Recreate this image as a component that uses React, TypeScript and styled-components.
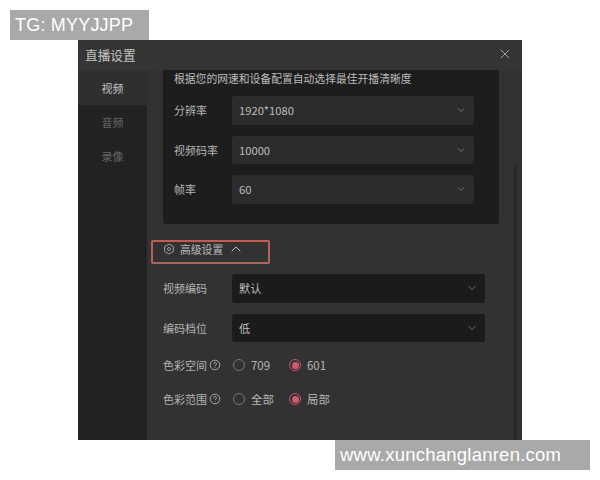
import React from "react";
import styled, { createGlobalStyle } from "styled-components";
import { X, ChevronDown, ChevronUp } from "lucide-react";

const CJK = `"Noto Sans CJK SC", "Noto Sans", sans-serif`;

const GlobalStyle = createGlobalStyle`
    html, body {
        margin: 0;
        padding: 0;
        background: #fff;
    }
    body {
        width: 600px;
        height: 480px;
        overflow: hidden;
        font-family: ${CJK};
    }
`;

const Page = styled.div`
    display: flex;
    flex-direction: column;
    align-items: flex-start;
    padding-top: 10px;
`;

const TopMark = styled.div`
    width: 139px;
    height: 30px;
    margin-left: 10px;
    padding-left: 5px;
    box-sizing: border-box;
    background: #a9a9a9;
    color: #fff;
    font: 18px/30px "Liberation Sans", sans-serif;
    letter-spacing: 0.2px;
`;

const BottomMark = styled.div`
    width: 255px;
    height: 30px;
    margin-left: 335px;
    padding-left: 5px;
    box-sizing: border-box;
    background: #a9a9a9;
    color: #fff;
    font: 18.5px/29px "Liberation Sans", sans-serif;
    letter-spacing: 0.24px;
`;

const Window = styled.div`
    width: 444px;
    height: 400px;
    margin-left: 78px;
    display: flex;
    flex-direction: column;
    background: #323232;
    overflow: hidden;
`;

const TitleBar = styled.div`
    height: 30px;
    flex: none;
    display: flex;
    align-items: center;
    justify-content: space-between;
    padding: 0 9px 2px 7px;
    box-sizing: border-box;
    background: #353535;
    color: #c4c4c4;
    font-size: 12.7px;
`;

const Body = styled.div`
    flex: 1;
    display: flex;
    min-height: 0;
`;

const Sidebar = styled.div`
    width: 69px;
    flex: none;
    background: #222;
`;

const Tab = styled.div<{ $active?: boolean }>`
    height: 34px;
    display: flex;
    align-items: center;
    justify-content: center;
    font-size: 11px;
    color: ${(p) => (p.$active ? "#c4c4c4" : "#666")};
    background: ${(p) => (p.$active ? "#2f2f2f" : "transparent")};
    &:first-child {
        height: 35px;
    }
`;

const Content = styled.div`
    flex: 1;
    display: flex;
    flex-direction: column;
    padding-left: 4px;
    position: relative;
`;

const Scrollbar = styled.div`
    position: absolute;
    right: 5px;
    top: 95px;
    bottom: 0;
    width: 3px;
    background: #2a2a2a;
`;

const InnerPanel = styled.div`
    width: 336px;
    height: 154px;
    margin-left: 12px;
    box-sizing: border-box;
    padding: 0 25px 0 11px;
    background: #1d1d1d;
    border-radius: 0 0 3px 3px;
`;

const Hint = styled.div`
    height: 18px;
    margin-bottom: 8px;
    font-size: 10.8px;
    line-height: 17px;
    color: #bdbdbd;
    white-space: nowrap;
`;

const Rows = styled.div<{ $gap: number; $top?: number }>`
    display: flex;
    flex-direction: column;
    gap: ${(p) => p.$gap}px;
    margin-top: ${(p) => p.$top ?? 0}px;
`;

const FieldRow = styled.div`
    display: flex;
    align-items: center;
`;

const FieldLabel = styled.div<{ $width: number }>`
    width: ${(p) => p.$width}px;
    flex: none;
    font-size: 11px;
    color: #b4b4b4;
    white-space: nowrap;
`;

const Select = styled.div<{ $dark?: boolean; $width: number }>`
    width: ${(p) => p.$width}px;
    height: 28.5px;
    display: flex;
    align-items: center;
    justify-content: space-between;
    box-sizing: border-box;
    padding: 0 7px;
    border-radius: 3px;
    font-size: 11.2px;
    color: #bdbdbd;
    background: ${(p) => (p.$dark ? "#1b1b1b" : "#2c2c2c")};
`;

const Caret = styled(ChevronDown)`
    color: #9a9a9a;
    flex: none;
`;

const AdvancedRow = styled.div`
    width: 119px;
    height: 24px;
    margin: 16px 0 10px 0;
    box-sizing: border-box;
    display: flex;
    align-items: center;
    gap: 5px;
    padding: 0 0 6px 10px;
    border: 2px solid #b95f59;
    border-radius: 2px;
    font-size: 10.8px;
    line-height: 14px;
    color: #bdbdbd;
    white-space: nowrap;
`;

const Advanced = styled.div`
    display: flex;
    flex-direction: column;
    padding-left: 12px;
`;

const RadioRow = styled.div`
    display: flex;
    align-items: center;
    height: 20px;
`;

const RadioLabel = styled.div`
    width: 70px;
    flex: none;
    display: flex;
    align-items: center;
    gap: 2px;
    font-size: 11px;
    color: #b4b4b4;
    white-space: nowrap;
`;

const RadioItem = styled.div<{ $width: number }>`
    width: ${(p) => p.$width}px;
    display: flex;
    align-items: center;
    gap: 6px;
    font-size: 11.4px;
    color: #b8b8b8;
    white-space: nowrap;
`;

const RadioDot = styled.span<{ $on?: boolean }>`
    width: 12px;
    height: 12px;
    flex: none;
    box-sizing: border-box;
    border-radius: 50%;
    border: 1px solid ${(p) => (p.$on ? "#d0506a" : "#777")};
    display: flex;
    align-items: center;
    justify-content: center;
    &::after {
        content: "";
        width: 7px;
        height: 7px;
        border-radius: 50%;
        background: ${(p) => (p.$on ? "#cf5a70" : "transparent")};
    }
`;

const HelpIcon = () => (
    <svg width="12" height="12" viewBox="0 0 12 12" fill="none" stroke="#b0b0b0" strokeWidth="0.9">
        <circle cx="6" cy="6" r="4.8" />
        <path d="M4.6 4.8a1.4 1.4 0 1 1 2.2 1.1c-.5.3-.8.6-.8 1.1" />
        <path d="M6 8.2v.7" />
    </svg>
);

const HexIcon = () => (
    <svg width="12" height="12" viewBox="0 0 12 12" fill="none" stroke="#aaa" strokeWidth="0.9">
        <path d="M6 1l4.4 2.5v5L6 11 1.6 8.5v-5z" />
        <circle cx="6" cy="6" r="1.5" />
    </svg>
);

const basicFields = [
    { label: "分辨率", value: "1920*1080" },
    { label: "视频码率", value: "10000" },
    { label: "帧率", value: "60" },
];

const advancedFields = [
    { label: "视频编码", value: "默认" },
    { label: "编码档位", value: "低" },
];

const radioFields = [
    { label: "色彩空间", off: "709", on: "601" },
    { label: "色彩范围", off: "全部", on: "局部" },
];

export default function App() {
    return (
        <Page>
            <GlobalStyle />
            <TopMark>TG: MYYJJPP</TopMark>
            <Window>
                <TitleBar>
                    <span>直播设置</span>
                    <X size={16} color="#bdbdbd" strokeWidth={1.2} />
                </TitleBar>
                <Body>
                    <Sidebar>
                        <Tab $active>视频</Tab>
                        <Tab>音频</Tab>
                        <Tab>录像</Tab>
                    </Sidebar>
                    <Content>
                        <Scrollbar />
                        <InnerPanel>
                            <Hint>根据您的网速和设备配置自动选择最佳开播清晰度</Hint>
                            <Rows $gap={11}>
                                {basicFields.map((f) => (
                                    <FieldRow key={f.label}>
                                        <FieldLabel $width={58}>{f.label}</FieldLabel>
                                        <Select $width={242}>
                                            {f.value}
                                            <Caret size={12} strokeWidth={1.3} />
                                        </Select>
                                    </FieldRow>
                                ))}
                            </Rows>
                        </InnerPanel>
                        <AdvancedRow>
                            <HexIcon />
                            高级设置
                            <ChevronUp size={16} color="#c8c8c8" strokeWidth={1.4} />
                        </AdvancedRow>
                        <Advanced>
                            <Rows $gap={11}>
                                {advancedFields.map((f) => (
                                    <FieldRow key={f.label}>
                                        <FieldLabel $width={69}>{f.label}</FieldLabel>
                                        <Select $dark $width={253}>
                                            {f.value}
                                            <Caret size={12} strokeWidth={1.3} />
                                        </Select>
                                    </FieldRow>
                                ))}
                            </Rows>
                            <Rows $gap={14} $top={13}>
                                {radioFields.map((f) => (
                                    <RadioRow key={f.label}>
                                        <RadioLabel>
                                            {f.label}
                                            <HelpIcon />
                                        </RadioLabel>
                                        <RadioItem $width={56}>
                                            <RadioDot />
                                            {f.off}
                                        </RadioItem>
                                        <RadioItem $width={60}>
                                            <RadioDot $on />
                                            {f.on}
                                        </RadioItem>
                                    </RadioRow>
                                ))}
                            </Rows>
                        </Advanced>
                    </Content>
                </Body>
            </Window>
            <BottomMark>www.xunchanglanren.com</BottomMark>
        </Page>
    );
}
